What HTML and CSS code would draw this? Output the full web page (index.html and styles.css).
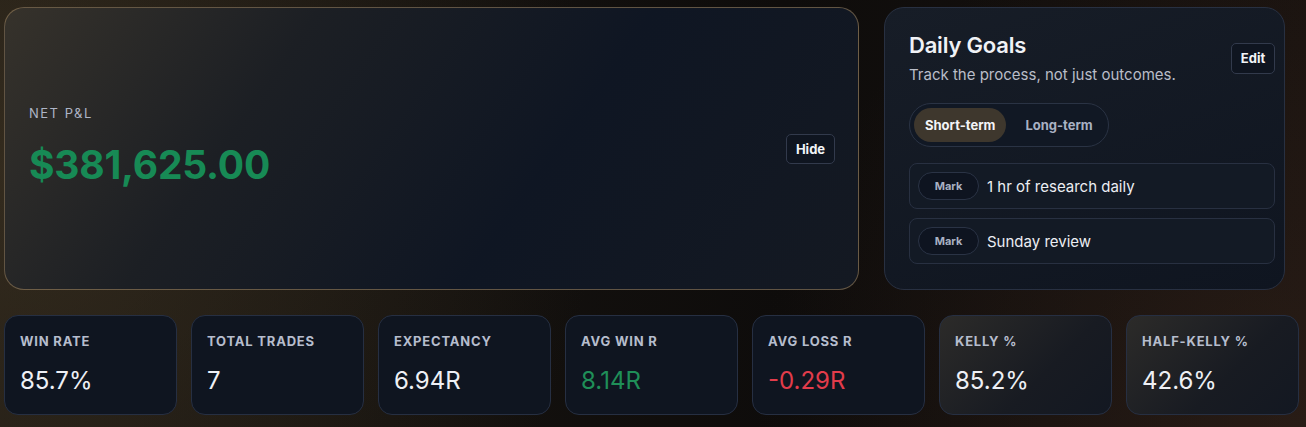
FILE: index.html
```html
<!DOCTYPE html>
<html lang="en">
  <head>
    <meta charset="UTF-8" />
    <meta name="viewport" content="width=device-width, initial-scale=1.0" />
    <title>Trading Dashboard</title>
    <link rel="stylesheet" href="styles.css">
  </head>
  <body>
    <div class="page">
      <div class="top-row">
        <section class="hero-card">
          <div class="hero-info">
            <div class="hero-label">NET P&amp;L</div>
            <div class="hero-value">$381,625.00</div>
          </div>
          <button class="small-btn">Hide</button>
        </section>

        <section class="goals-card">
          <div class="goals-header">
            <div>
              <h2>Daily Goals</h2>
              <p>Track the process, not just outcomes.</p>
            </div>
            <button class="small-btn">Edit</button>
          </div>
          <div class="toggle">
            <button class="toggle-item active">Short-term</button>
            <button class="toggle-item">Long-term</button>
          </div>
          <div class="goal-list">
            <div class="goal-row">
              <button class="mark-btn">Mark</button>
              <span>1 hr of research daily</span>
            </div>
            <div class="goal-row">
              <button class="mark-btn">Mark</button>
              <span>Sunday review</span>
            </div>
          </div>
        </section>
      </div>

      <div class="stats-row">
        <div class="stat-card">
          <div class="stat-label">WIN RATE</div>
          <div class="stat-value">85.7%</div>
        </div>
        <div class="stat-card">
          <div class="stat-label">TOTAL TRADES</div>
          <div class="stat-value">7</div>
        </div>
        <div class="stat-card">
          <div class="stat-label">EXPECTANCY</div>
          <div class="stat-value">6.94R</div>
        </div>
        <div class="stat-card">
          <div class="stat-label">AVG WIN R</div>
          <div class="stat-value positive">8.14R</div>
        </div>
        <div class="stat-card">
          <div class="stat-label">AVG LOSS R</div>
          <div class="stat-value negative">-0.29R</div>
        </div>
        <div class="stat-card warm">
          <div class="stat-label">KELLY %</div>
          <div class="stat-value">85.2%</div>
        </div>
        <div class="stat-card warm">
          <div class="stat-label">HALF-KELLY %</div>
          <div class="stat-value">42.6%</div>
        </div>
      </div>
    </div>
  </body>
</html>
```

FILE: styles.css
```css
body {
  margin: 0;
  height: 100vh;
  overflow: hidden;
  font-family: Inter, "Noto Sans", sans-serif;
  color: #eef0f5;
  background-color: #100d0b;
  background-image:
    radial-gradient(circle at 0% 40%, rgba(70, 58, 38, 0.55), transparent 45%),
    radial-gradient(circle at 100% 100%, rgba(60, 40, 30, 0.45), transparent 40%),
    linear-gradient(90deg, #1c1813, #0e0c0b 60%, #18120f);
}

.page {
  padding: 7px 0 0 4px;
}

.top-row {
  display: grid;
  grid-template-columns: 855px 401px;
  gap: 25px;
  height: 283px;
}

button {
  font-family: inherit;
  cursor: pointer;
}

.small-btn {
  background-color: #0f1520;
  color: #f2f4f8;
  border: 1px solid #323a4c;
  border-radius: 5px;
  font-size: 13px;
  font-weight: 700;
  padding: 0 10px;
  height: 31px;
}

.hero-card {
  display: flex;
  align-items: center;
  justify-content: space-between;
  padding: 0 23px 0 24px;
  border: 1px solid rgba(150, 125, 90, 0.6);
  border-radius: 20px;
  background: linear-gradient(125deg, #36322b 0%, #1c1f24 30%, #0f1623 62%, #141922 100%);
}

.hero-info {
  margin-bottom: 5px;
}

.hero-label {
  font-size: 13px;
  line-height: 16px;
  letter-spacing: 1.5px;
  color: #aeb5c6;
}

.hero-value {
  margin-top: 21px;
  font-size: 39px;
  line-height: 46px;
  font-weight: 700;
  letter-spacing: -0.2px;
  color: #178a55;
}

.hero-card .small-btn {
  height: 30px;
  width: 49px;
  padding: 0;
}

.goals-card {
  padding: 23px 9px 0 24px;
  border: 1px solid #283041;
  border-radius: 20px;
  background: linear-gradient(160deg, #171d27, #0f1520);
}

.goals-header {
  display: flex;
  align-items: center;
  justify-content: space-between;
}

.goals-header h2 {
  margin: 0;
  font-size: 22px;
  line-height: 28px;
  font-weight: 600;
  letter-spacing: -0.2px;
  color: #f0f2f6;
}

.goals-header p {
  margin: 6px 0 0;
  font-size: 15px;
  line-height: 20px;
  color: #b9bdc8;
}

.goals-header .small-btn {
  width: 44px;
  padding: 0;
}

.toggle {
  display: inline-flex;
  gap: 8px;
  margin-top: 18px;
  padding: 4px;
  border: 1px solid #2a3344;
  border-radius: 22px;
  background-color: #111824;
}

.toggle-item {
  height: 34px;
  padding: 0 11px;
  border: none;
  border-radius: 17px;
  background: transparent;
  color: #a9b1c3;
  font-size: 13px;
  font-weight: 700;
}

.toggle-item.active {
  background-color: #3e372d;
  color: #f3f4f7;
}

.goal-list {
  display: flex;
  flex-direction: column;
  gap: 9px;
  margin-top: 16px;
}

.goal-row {
  display: flex;
  align-items: center;
  gap: 8px;
  height: 44px;
  padding: 0 8px;
  border: 1px solid #283041;
  border-radius: 8px;
  background-color: #131a25;
  font-size: 15px;
  color: #eceef3;
}

.mark-btn {
  width: 61px;
  height: 28px;
  border: 1px solid #2a3345;
  border-radius: 14px;
  background-color: #0e1420;
  color: #a9b1c3;
  font-size: 11px;
  font-weight: 700;
}

.stats-row {
  display: grid;
  grid-template-columns: repeat(7, 173px);
  gap: 14px;
  margin-top: 25px;
}

.stat-card {
  height: 100px;
  box-sizing: border-box;
  padding: 17px 15px 0;
  border: 1px solid #262f42;
  border-radius: 14px;
  background-color: #0f1520;
}

.stat-card.warm {
  background: linear-gradient(135deg, #2c2b29, #181b22 60%, #131822);
}

.stat-label {
  font-size: 13px;
  line-height: 16px;
  font-weight: 700;
  letter-spacing: 0.8px;
  color: #b6bdcd;
}

.stat-value {
  margin-top: 18px;
  font-size: 24px;
  line-height: 28px;
  color: #eef0f5;
}

.stat-value.positive {
  color: #1f8f58;
}

.stat-value.negative {
  color: #e23c4b;
}
```
